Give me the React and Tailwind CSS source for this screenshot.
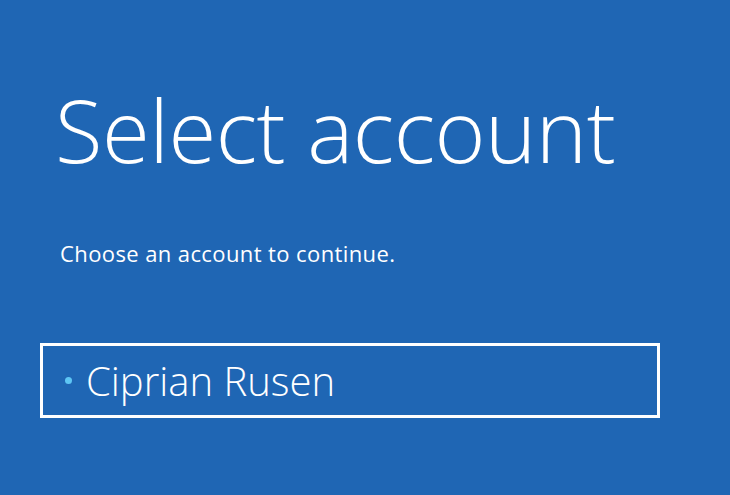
export default function App() {
  return (
    <div
      className="w-[730px] h-[495px] overflow-hidden bg-[#1f66b4] text-white"
      style={{ fontFamily: '"Open Sans", "Noto Sans", sans-serif' }}
    >
      <div className="pl-[55px] pt-[74px]">
        <h1 className="text-[87px] font-light leading-[110px] tracking-[-0.5px]">Select account</h1>
      </div>
      <p className="pl-[60px] mt-[56px] text-[22px] leading-[26px] tracking-[0.4px]">Choose an account to continue.</p>
      <div className="ml-[40px] mt-[77px] w-[620px] h-[75px] border-[3px] border-white flex items-center">
        <span className="ml-[22px] w-[7px] h-[7px] rounded-full bg-[#5ec6f4]"></span>
        <span className="ml-[14px] text-[40px] font-light leading-none">Ciprian Rusen</span>
      </div>
    </div>
  )
}
